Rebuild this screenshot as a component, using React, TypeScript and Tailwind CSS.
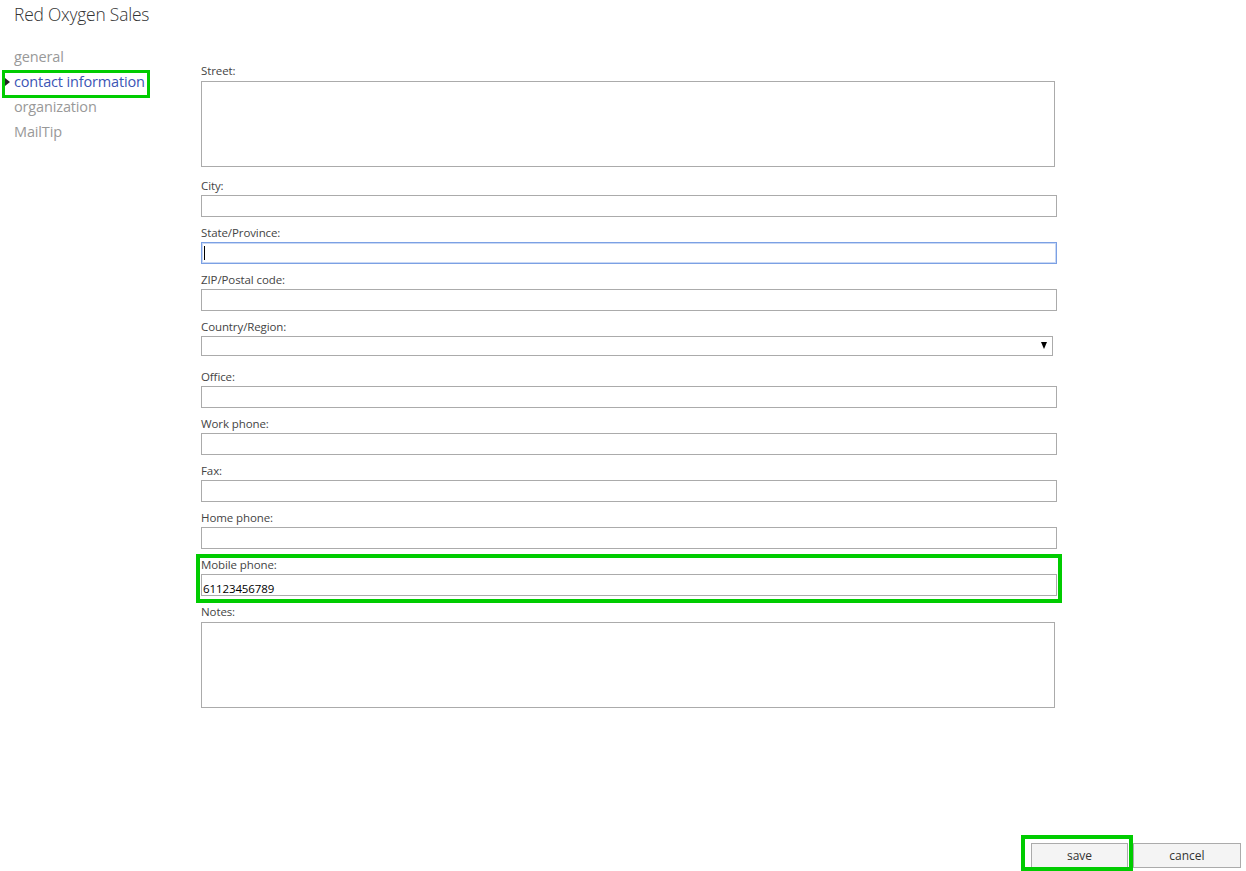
import React from "react";

const font = { fontFamily: '"Open Sans", "Noto Sans", "Liberation Sans", sans-serif' };

const navItems = ["general", "contact information", "organization", "MailTip"];

function Label({ children }: { children: React.ReactNode }) {
  return <div className="text-[11.5px] leading-[15px] text-[#444] tracking-[-0.1px]">{children}</div>;
}

function TextBox({ value = "", focused = false }: { value?: string; focused?: boolean }) {
  return (
    <div
      className={`relative mt-[2px] h-[22px] w-[856px] border bg-white ${
        focused ? "border-[#7ba0e4] shadow-[inset_0_0_0_1px_#c9d8f4]" : "border-[#ababab]"
      }`}
    >
      <input
        readOnly
        value={value}
        className="h-full w-full bg-transparent px-[1px] text-[11.5px] tracking-[-0.1px] text-black outline-none"
        style={font}
      />
      {focused && <span className="absolute left-[2px] top-[3px] h-[14px] w-[1px] bg-black" />}
    </div>
  );
}

function Field({ label, value, focused }: { label: string; value?: string; focused?: boolean }) {
  return (
    <div className="mb-[8px]">
      <Label>{label}</Label>
      <TextBox value={value} focused={focused} />
    </div>
  );
}

function Area({ label }: { label: string }) {
  return (
    <div>
      <Label>{label}</Label>
      <div className="mt-[3px] h-[86px] w-[854px] border border-[#ababab] bg-white" />
    </div>
  );
}

export default function App() {
  return (
    <div className="relative flex h-[871px] w-[1246px] flex-col bg-white" style={font}>
      <div className="pl-[14px] pt-[2px] text-[17.4px] font-light leading-[24px] text-[#333] tracking-[-0.2px]">
        Red Oxygen Sales
      </div>

      <div className="flex flex-1">
        {/* left nav */}
        <nav className="w-[201px] pt-[18px]">
          {navItems.map((item) => {
            const active = item === "contact information";
            return (
              <div key={item} className="relative flex h-[25px] items-center pl-[14px]">
                {active && (
                  <>
                    <span className="absolute left-[5px] top-[9px] h-0 w-0 border-y-[4px] border-l-[5px] border-y-transparent border-l-[#222]" />
                    <span className="pointer-events-none absolute left-[2px] top-[1px] h-[28px] w-[148px] border-[3px] border-[#00cc00]" />
                  </>
                )}
                <span
                  className={`text-[14.5px] tracking-[-0.15px] ${active ? "text-[#3b55b5]" : "text-[#999]"}`}
                >
                  {item}
                </span>
              </div>
            );
          })}
        </nav>

        {/* form */}
        <div className="flex flex-col pt-[37px]">
          <div className="mb-[11px]">
            <Area label="Street:" />
          </div>
          <Field label="City:" />
          <Field label="State/Province:" focused />
          <Field label="ZIP/Postal code:" />
          <div className="mb-[13px]">
            <Label>Country/Region:</Label>
            <div className="relative mt-[2px] h-[20px] w-[852px] border border-[#ababab] bg-white">
              <span className="absolute right-[5px] top-[5px] h-0 w-0 border-x-[3.5px] border-t-[7px] border-x-transparent border-t-black" />
            </div>
          </div>
          <Field label="Office:" />
          <Field label="Work phone:" />
          <Field label="Fax:" />
          <Field label="Home phone:" />
          <div className="relative mb-[8px]">
            <span className="pointer-events-none absolute left-[-5px] top-[-3px] h-[49px] w-[866px] border-[4px] border-[#00cc00]" />
            <Label>Mobile phone:</Label>
            <TextBox value="61123456789" />
          </div>
          <Area label="Notes:" />
        </div>
      </div>

      {/* buttons */}
      <div className="flex items-end justify-end gap-[5px] pb-[3px] pr-[5px]">
        <div className="relative flex">
          <span className="pointer-events-none absolute left-[-10px] top-[-8px] h-[36px] w-[112px] border-[4px] border-[#00cc00]" />
          <button className="h-[25px] w-[97px] border border-[#ababab] bg-[#f4f4f4] text-[12px] text-[#333]" style={font}>
            save
          </button>
        </div>
        <button className="h-[25px] w-[108px] border border-[#ababab] bg-[#f4f4f4] text-[12px] text-[#333]" style={font}>
          cancel
        </button>
      </div>
    </div>
  );
}
